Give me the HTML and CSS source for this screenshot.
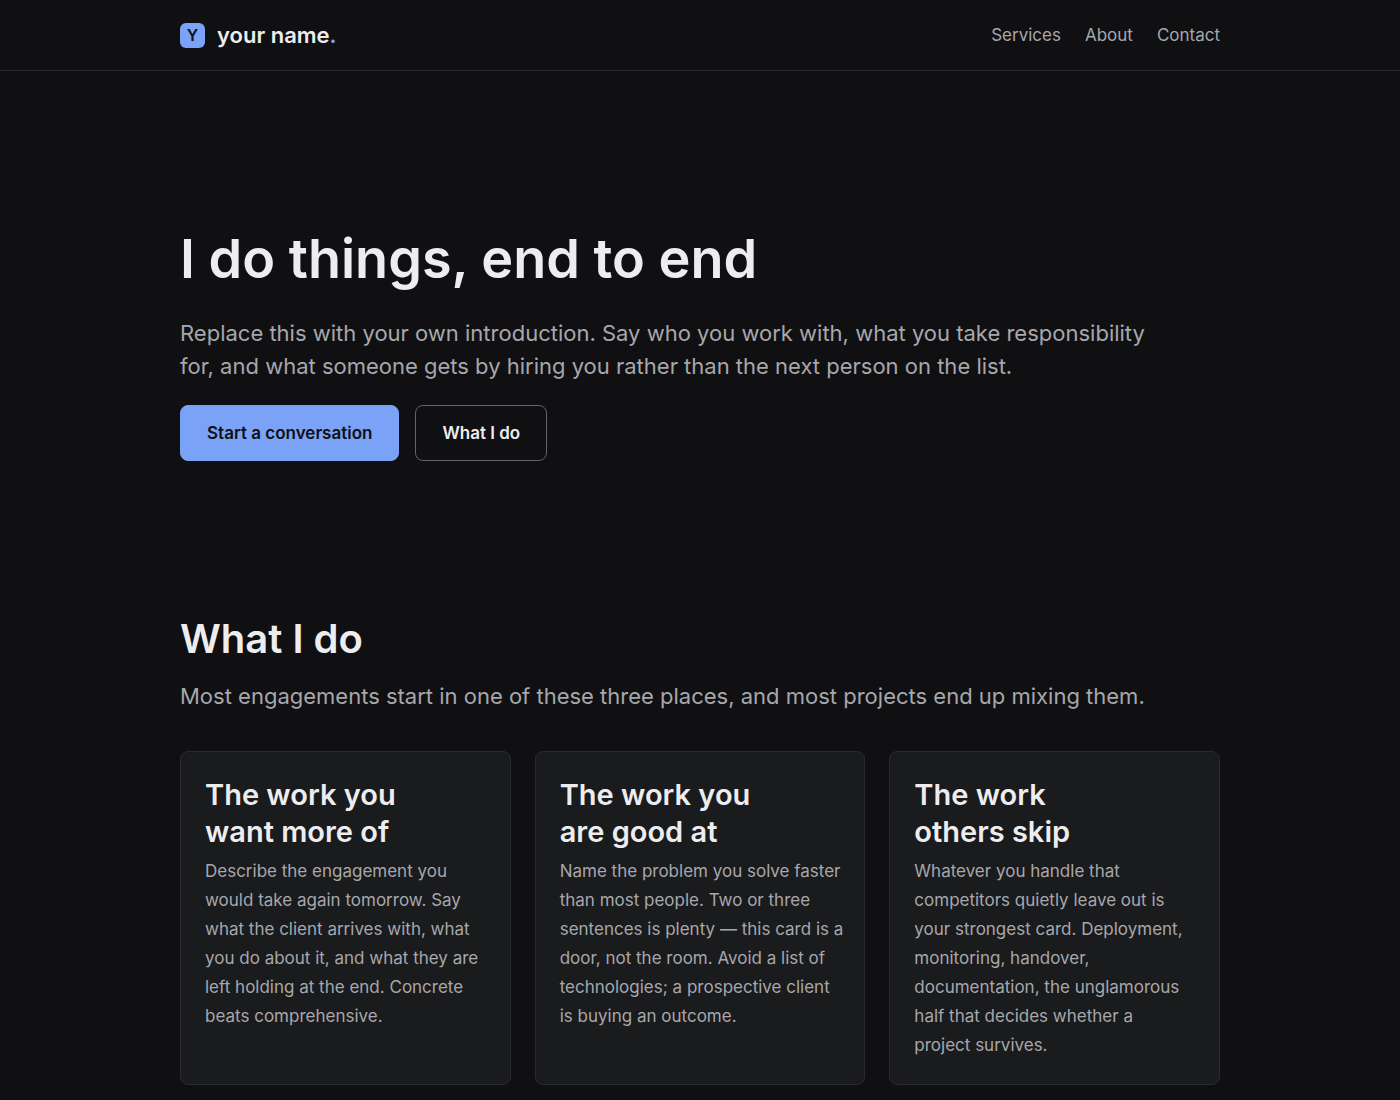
FILE: index.html
```html
<!DOCTYPE html>
<html lang="en">
  <head>
    <meta charset="UTF-8" />
    <meta name="viewport" content="width=device-width, initial-scale=1.0" />
    <title>your name.</title>
    <link rel="stylesheet" href="styles.css">
  </head>
  <body>
    <header class="site-header">
      <div class="container header-inner">
        <a class="brand" href="#top">
          <span class="brand-mark">Y</span>
          <span class="brand-name">your name<span class="brand-dot">.</span></span>
        </a>
        <nav class="nav">
          <a href="#services">Services</a>
          <a href="#about">About</a>
          <a href="#contact">Contact</a>
        </nav>
      </div>
    </header>

    <main class="container" id="top">
      <section class="hero">
        <h1>I do things, end to end</h1>
        <p class="lead">
          Replace this with your own introduction. Say who you work with, what
          you take responsibility for, and what someone gets by hiring you
          rather than the next person on the list.
        </p>
        <div class="actions">
          <a class="button button-primary" href="#contact">Start a conversation</a>
          <a class="button" href="#services">What I do</a>
        </div>
      </section>

      <section class="services" id="services">
        <h2>What I do</h2>
        <p class="lead">
          Most engagements start in one of these three places, and most projects
          end up mixing them.
        </p>
        <div class="cards">
          <article class="card">
            <h3>The work you want more of</h3>
            <p>
              Describe the engagement you would take again tomorrow. Say what
              the client arrives with, what you do about it, and what they are
              left holding at the end. Concrete beats comprehensive.
            </p>
          </article>
          <article class="card">
            <h3>The work you are good at</h3>
            <p>
              Name the problem you solve faster than most people. Two or three
              sentences is plenty — this card is a door, not the room. Avoid a
              list of technologies; a prospective client is buying an outcome.
            </p>
          </article>
          <article class="card">
            <h3>The work others skip</h3>
            <p>
              Whatever you handle that competitors quietly leave out is your
              strongest card. Deployment, monitoring, handover, documentation,
              the unglamorous half that decides whether a project survives.
            </p>
          </article>
        </div>
      </section>
    </main>
  </body>
</html>
```

FILE: styles.css
```css
* {
  box-sizing: border-box;
}
body {
  margin: 0;
  background: #101012;
  color: #ededef;
  font-family: Inter, "Liberation Sans", sans-serif;
  font-size: 17px;
  line-height: 29px;
}
a {
  color: inherit;
  text-decoration: none;
}
h1,
h2,
h3,
p {
  margin: 0;
}
h1,
h2,
h3 {
  font-weight: 600;
  text-wrap: balance;
}
p {
  text-wrap: pretty;
}
.container {
  max-width: 1088px;
  margin: 0 auto;
  padding: 0 24px;
}
.site-header {
  border-bottom: 1px solid #2a2b2d;
}
.header-inner {
  display: flex;
  justify-content: space-between;
  align-items: center;
  min-height: 70px;
}
.brand {
  display: flex;
  align-items: center;
  gap: 12px;
}
.brand-mark {
  width: 25px;
  height: 25px;
  border-radius: 6px;
  background: #7aa2f7;
  color: #101012;
  font-size: 16px;
  font-weight: 600;
  line-height: 25px;
  text-align: center;
}
.brand-name {
  font-size: 22px;
  font-weight: 600;
}
.brand-dot {
  color: #7aa2f7;
}
.nav {
  display: flex;
  gap: 24px;
  color: #a7a7ac;
}
.hero {
  padding: 152px 0;
}
h1 {
  font-size: 54px;
  line-height: 72px;
  margin-bottom: 22px;
}
.lead {
  max-width: 980px;
  color: #a7a7ac;
  font-size: 22px;
  line-height: 33px;
}
.actions {
  display: flex;
  flex-wrap: wrap;
  gap: 16px;
  margin-top: 22px;
}
.button {
  padding: 13px 26px;
  border: 1px solid #636368;
  border-radius: 8px;
  font-weight: 600;
  line-height: 28px;
}
.button-primary {
  background: #7aa2f7;
  border-color: #7aa2f7;
  color: #101012;
}
h2 {
  font-size: 40px;
  line-height: 52px;
  margin-bottom: 15px;
}
.cards {
  display: grid;
  grid-template-columns: repeat(auto-fit, minmax(280px, 1fr));
  gap: 24px;
  margin-top: 38px;
}
.card {
  padding: 24px 20px 24px 24px;
  border: 1px solid #2a2b2d;
  border-radius: 8px;
  background: #1a1b1d;
}
.card h3 {
  font-size: 29px;
  line-height: 37px;
  margin-bottom: 7px;
}
.card p {
  color: #a7a7ac;
}
```
